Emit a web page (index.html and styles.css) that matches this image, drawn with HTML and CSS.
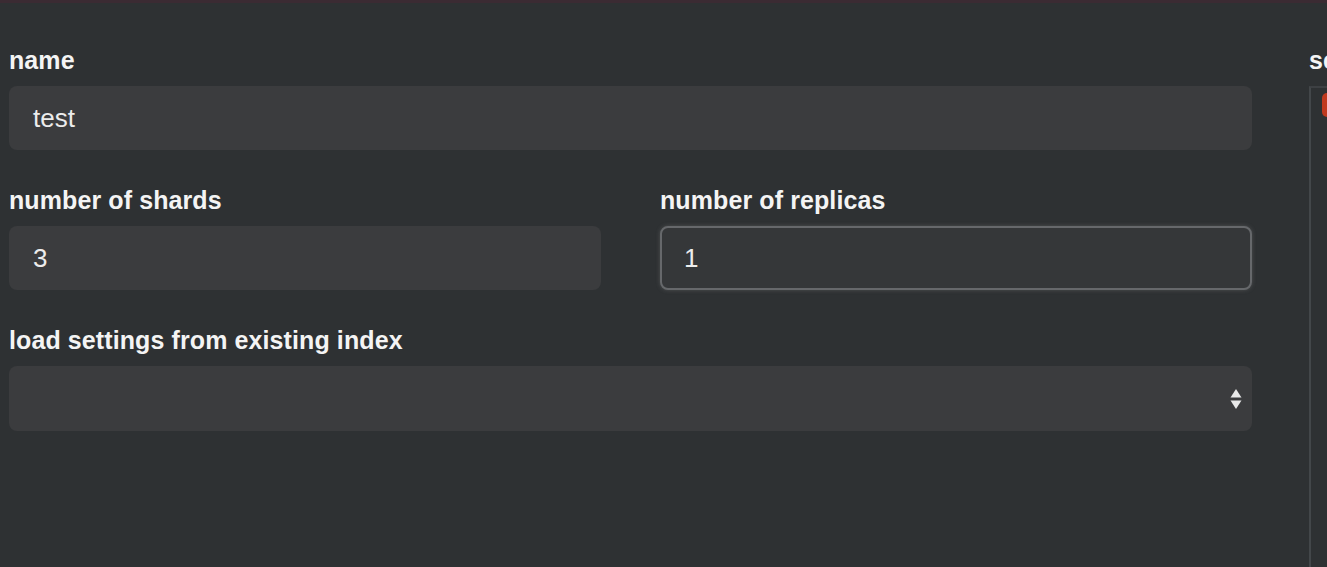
FILE: index.html
```html
<!DOCTYPE html>
<html>
<head>
<meta charset="utf-8">
<link rel="stylesheet" href="styles.css">
</head>
<body>
<div class="topline"></div>
<div class="layout">
  <form class="form">
    <div class="field">
      <label class="label">name</label>
      <div class="input">test</div>
    </div>
    <div class="row">
      <div class="field">
        <label class="label">number of shards</label>
        <div class="input">3</div>
      </div>
      <div class="field">
        <label class="label">number of replicas</label>
        <div class="input focused">1</div>
      </div>
    </div>
    <div class="field">
      <label class="label">load settings from existing index</label>
      <div class="input select">
        <svg class="arrows" width="12" height="24" viewBox="0 0 12 24">
          <path d="M6 2 L11.5 10.5 H0.5 Z" fill="#e8e8e8"/>
          <path d="M6 22 L11.5 13.5 H0.5 Z" fill="#e8e8e8"/>
        </svg>
      </div>
    </div>
  </form>
  <aside class="side">
    <label class="label">settings</label>
    <div class="sidebox">
      <div class="redbtn"></div>
    </div>
  </aside>
</div>
</body>
</html>
```

FILE: styles.css
```css
html, body {
  margin: 0;
  padding: 0;
  height: 100%;
}
body {
  background: #2e3133;
  font-family: "Liberation Sans", Arial, Helvetica, sans-serif;
  color: #f2f2f2;
  overflow: hidden;
}
.topline {
  height: 3px;
  background: #3b2b33;
}
.layout {
  display: flex;
  gap: 57px;
  padding: 42px 0 0 9px;
  height: calc(100% - 3px);
  box-sizing: border-box;
}
.form {
  width: 1243px;
  flex: none;
  display: flex;
  flex-direction: column;
  gap: 35px;
}
.row {
  display: grid;
  grid-template-columns: 592px 592px;
  column-gap: 59px;
}
.field {
  display: flex;
  flex-direction: column;
  gap: 11px;
}
.label {
  font-size: 25px;
  font-weight: bold;
  line-height: 30px;
  color: #f4f4f4;
  letter-spacing: 0.1px;
}
.input {
  height: 64px;
  box-sizing: border-box;
  background: #3b3c3e;
  border-radius: 8px;
  padding: 0 24px;
  display: flex;
  align-items: center;
  font-size: 26px;
  color: #ececec;
}
.input.focused {
  border: 2px solid #66686b;
  box-shadow: 0 0 4px rgba(140, 140, 140, 0.35);
  padding-left: 22px;
  background: #353739;
}
.select {
  height: 65px;
  justify-content: flex-end;
  padding-right: 10px;
}
.arrows {
  display: block;
}
.side {
  flex: none;
  width: 300px;
  display: flex;
  flex-direction: column;
  gap: 11px;
}
.sidebox {
  flex: 1;
  border-left: 2px solid #43474a;
  border-top: 2px solid #3d4043;
  padding: 5px 0 0 11px;
}
.redbtn {
  width: 40px;
  height: 24px;
  border-radius: 5px;
  background: #c0391f;
}
```
